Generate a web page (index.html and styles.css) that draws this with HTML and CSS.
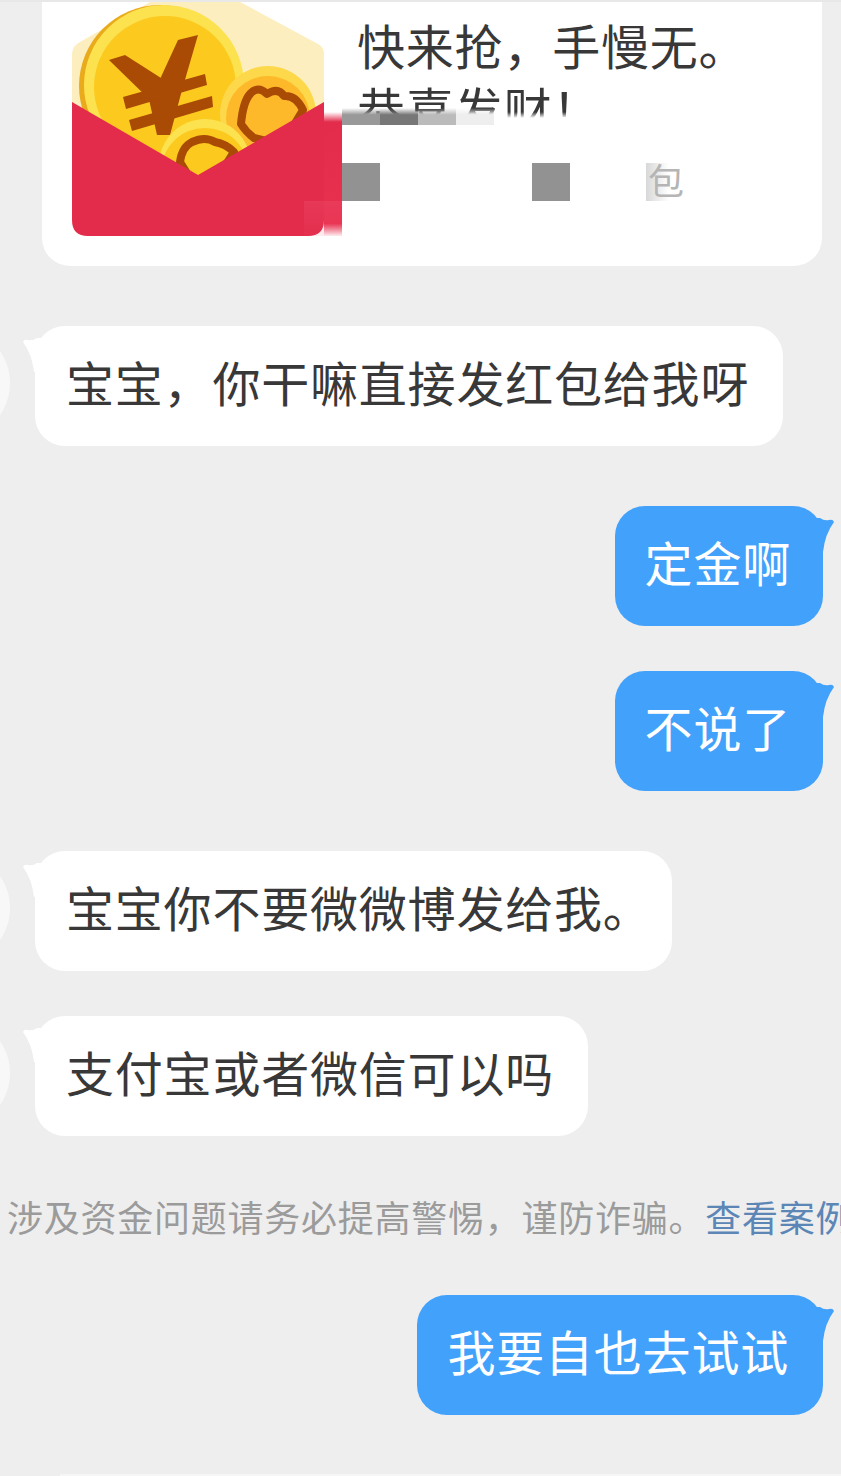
FILE: index.html
```html
<!DOCTYPE html>
<html lang="zh-CN">
<head>
    <meta charset="UTF-8">
    <meta name="viewport" content="width=device-width, initial-scale=1.0">
    <title>聊天</title>
    <link rel="stylesheet" href="styles.css">
</head>
<body>
    <div class="chat">
        <div class="card">
            <svg class="card-icon" viewBox="72 2 252 234" width="252" height="234">
                <path d="M72 54 Q72 46 80 42 L150 2 L240 2 L318 44 Q324 47 324 54 L324 130 L72 130 Z" fill="#fdeebf"/>
                <circle cx="160" cy="86" r="81" fill="#e9ab1c"/>
                <circle cx="164" cy="85" r="80" fill="#fde24f"/>
                <circle cx="165" cy="87" r="71" fill="#fcc91f"/>
                <polygon points="109,60 125,55 172,85 150,100" fill="#a94a05"/>
                <polygon points="178,40 198,35 182,90 155,90" fill="#a94a05"/>
                <polygon points="148,95 182,90 170,135 157,135" fill="#a94a05"/>
                <polygon points="123,97 205,74 207,85 126,109" fill="#a94a05"/>
                <polygon points="129,120 212,96 213,107 132,131" fill="#a94a05"/>
                <circle cx="268" cy="114" r="48" fill="#fdd84a"/>
                <circle cx="268" cy="118" r="42" fill="#fdb92a"/>
                <path d="M241 124 Q243 102 250 94 Q258 85 267 94 Q278 87 284 96 Q296 95 303 110 L282 145 L254 138 Q246 132 241 124 Z" fill="#fdb92a" stroke="#a94a05" stroke-width="8" stroke-linejoin="round"/>
                <circle cx="205" cy="165" r="46" fill="#fde24f"/>
                <circle cx="205" cy="172" r="44" fill="#fcc91f"/>
                <path d="M180 162 Q182 147 192 142 Q205 136 215 142 Q226 144 234 152 L215 182 L190 178 Z" fill="#fcc91f" stroke="#a94a05" stroke-width="8" stroke-linejoin="round"/>
                <path d="M72 102 L198 175 L324 102 L324 220 Q324 236 308 236 L88 236 Q72 236 72 220 Z" fill="#e32b4b"/>
            </svg>
            <div class="card-text">
                <div class="card-title">快来抢，手慢无。</div>
                <div class="card-title card-title-cut">恭喜发财！</div>
                <div class="card-meta">
                    <span class="tile"></span>
                    <span class="tile tile-b"></span>
                    <span class="tile tile-c">包</span>
                </div>
            </div>
            <div class="smear">
                <span class="smear-1"></span>
                <span class="smear-2"></span>
                <span class="smear-3"></span>
                <span class="smear-4"></span>
            </div>
            <div class="red-band"></div>
            <div class="red-band-low"></div>
        </div>

        <div class="row row-in row-first">
            <div class="avatar"></div>
            <div class="bubble">宝宝，你干嘛直接发红包给我呀</div>
        </div>
        <div class="row row-out row-next-far">
            <div class="bubble">定金啊</div>
        </div>
        <div class="row row-out row-next">
            <div class="bubble">不说了</div>
        </div>
        <div class="row row-in row-next-far">
            <div class="avatar"></div>
            <div class="bubble bubble-short">宝宝你不要微微博发给我。</div>
        </div>
        <div class="row row-in row-next">
            <div class="avatar"></div>
            <div class="bubble">支付宝或者微信可以吗</div>
        </div>

        <div class="notice">涉及资金问题请务必提高警惕，谨防诈骗。<span class="notice-link">查看案例</span></div>

        <div class="row row-out row-last">
            <div class="bubble bubble-wide">我要自也去试试</div>
        </div>
        <div class="next-top"></div>
    </div>
</body>
</html>
```

FILE: styles.css
```css
html, body {
    margin: 0;
    padding: 0;
}
body {
    font-family: "Noto Sans CJK SC", "Liberation Sans", sans-serif;
    background-color: #eeeeee;
    color: #383838;
    width: 841px;
    height: 1476px;
    overflow: hidden;
}
.chat {
    border-top: 2px solid #e8e8e8;
    height: 1474px;
    overflow: hidden;
}
.card {
    position: relative;
    display: flex;
    gap: 33px;
    box-sizing: border-box;
    width: 780px;
    height: 264px;
    margin-left: 42px;
    padding-left: 30px;
    background-color: #ffffff;
    border-radius: 0 0 28px 28px;
}
.card-icon {
    display: block;
    flex-shrink: 0;
}
.card-text {
    flex: 1;
    padding-top: 10px;
}
.card-title {
    font-size: 48px;
    line-height: 65px;
    letter-spacing: 0.8px;
    white-space: nowrap;
}
.card-title-cut {
    height: 41px;
    line-height: 61px;
    overflow: hidden;
    -webkit-mask-image: linear-gradient(to bottom, #000 35px, transparent 41px);
    mask-image: linear-gradient(to bottom, #000 35px, transparent 41px);
}
.card-meta {
    display: flex;
    gap: 152px;
    margin-left: -15px;
    margin-top: 45px;
}
.tile {
    display: block;
    width: 38px;
    height: 38px;
    background-color: #929292;
}
.tile-b {
    margin-right: -76px;
}
.tile-c {
    box-sizing: border-box;
    padding-left: 2px;
    font-size: 36px;
    line-height: 32px;
    color: #b5b5b5;
    background: linear-gradient(to right, #d8d8d8, #ffffff 60%);
}
.smear {
    position: absolute;
    left: 300px;
    top: 106px;
    display: flex;
}
.smear span {
    display: block;
    width: 38px;
    height: 17px;
}
.smear-1 {
    background: linear-gradient(to top, #999999 60%, transparent);
}
.smear-2 {
    background: linear-gradient(to top, #777777 60%, transparent);
}
.smear-3 {
    background: linear-gradient(to top, #bbbbbb 60%, transparent);
}
.smear-4 {
    background: linear-gradient(to top, #eeeeee 60%, transparent);
}
.red-band {
    position: absolute;
    left: 282px;
    top: 110px;
    width: 18px;
    height: 124px;
    background: linear-gradient(to bottom, transparent, #e32b4b 10px, #e8304f 90%, transparent);
}
.red-band-low {
    position: absolute;
    left: 262px;
    top: 199px;
    width: 38px;
    height: 35px;
    background: linear-gradient(to bottom, rgba(238, 80, 110, 0.35), rgba(238, 80, 110, 0.1));
}
.row {
    display: flex;
    align-items: center;
}
.row-in {
    gap: 25px;
}
.row-out {
    justify-content: flex-end;
    padding-right: 18px;
}
.row-first {
    margin-top: 60px;
}
.row-next-far {
    margin-top: 60px;
}
.row-next {
    margin-top: 45px;
}
.row-last {
    margin-top: 51px;
}
.avatar {
    flex-shrink: 0;
    width: 112px;
    height: 112px;
    margin-left: -102px;
    margin-top: -6px;
    border-radius: 50%;
    background-color: #f8f8f8;
}
.bubble {
    position: relative;
    box-sizing: border-box;
    height: 120px;
    padding: 0 34px 0 31px;
    font-size: 48px;
    line-height: 110px;
    letter-spacing: 0.8px;
    white-space: nowrap;
    border-radius: 30px;
    background-color: #ffffff;
}
.bubble-short {
    padding-right: 20px;
}
.row-in .bubble::before {
    content: "";
    position: absolute;
    left: -12px;
    top: 12px;
    width: 22px;
    height: 34px;
    background-color: #ffffff;
    clip-path: path("M0 4 Q1 1 5 2 Q10 3 14 0 L22 0 L22 34 L11 34 Q9 16 0 4 Z");
}
.row-out .bubble {
    padding: 0 32px 0 30px;
    color: #ffffff;
    background-color: #42a1fb;
}
.row-out .bubble-wide {
    padding: 0 34px 0 30px;
}
.row-out .bubble::after {
    content: "";
    position: absolute;
    right: -11px;
    top: 12px;
    width: 22px;
    height: 34px;
    background-color: #42a1fb;
    clip-path: path("M22 4 Q21 1 17 2 Q12 3 8 0 L0 0 L0 34 L11 34 Q13 16 22 4 Z");
}
.notice {
    margin-top: 52px;
    padding-left: 7px;
    height: 56px;
    font-size: 36px;
    line-height: 56px;
    letter-spacing: 0.75px;
    color: #9b9b9b;
    white-space: nowrap;
}
.notice-link {
    color: #5b86b5;
}
.next-top {
    height: 2px;
    margin-top: 59px;
    margin-left: 60px;
    background-color: #f6f6f6;
}
```
